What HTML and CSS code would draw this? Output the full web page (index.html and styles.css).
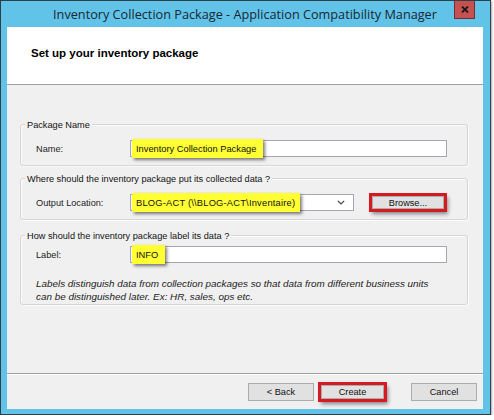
FILE: index.html
```html
<!DOCTYPE html>
<html>
<head>
<meta charset="utf-8">
<link rel="stylesheet" href="styles.css">
</head>
<body>
<div class="window">
  <div class="titlebar">
    <span class="spacer"></span>
    <span class="title">Inventory Collection Package - Application Compatibility Manager</span>
    <span class="close-wrap">
      <span class="close"><svg width="8" height="7" viewBox="0 0 8 7"><path d="M1 0.5 L7 6.5 M7 0.5 L1 6.5" stroke="#1a1a1a" stroke-width="1.8"/></svg></span>
    </span>
  </div>
  <div class="client">
    <div class="header"><h1>Set up your inventory package</h1></div>
    <div class="content">
      <section class="group g1">
        <div class="group-title">Package Name</div>
        <div class="row">
          <span class="label">Name:</span>
          <div class="field text"><span class="hl">Inventory Collection Package</span></div>
        </div>
      </section>
      <section class="group g2">
        <div class="group-title">Where should the inventory package put its collected data ?</div>
        <div class="row">
          <span class="label">Output Location:</span>
          <div class="field combo">
            <span class="hl wide">BLOG-ACT (\\BLOG-ACT\Inventaire)</span>
            <svg class="chev" width="8" height="5" viewBox="0 0 8 5"><path d="M0.8 0.8 L4 4 L7.2 0.8" fill="none" stroke="#444" stroke-width="1.2"/></svg>
          </div>
          <span class="btn browse marked">Browse...</span>
        </div>
      </section>
      <section class="group g3">
        <div class="group-title">How should the inventory package label its data ?</div>
        <div class="row">
          <span class="label">Label:</span>
          <div class="field text"><span class="hl">INFO</span></div>
        </div>
        <p class="note">Labels distinguish data from collection packages so that data from different business units<br>can be distinguished later. Ex: HR, sales, ops etc.</p>
      </section>
    </div>
    <div class="footer">
      <span class="btn back">&lt; Back</span>
      <span class="btn create marked">Create</span>
      <span class="btn cancel">Cancel</span>
    </div>
  </div>
</div>
</body>
</html>
```

FILE: styles.css
```css
* { box-sizing: border-box; }
body {
  margin: 0;
  background: #fff;
  font-family: "Liberation Sans", Arial, sans-serif;
  font-size: 9.2px;
  color: #1a1a1a;
}
.window {
  width: 491px;
  height: 415px;
  border: 1px solid #2e3f49;
  background: #62c3e9;
  padding: 0 7px 5px 6px;
  display: flex;
  flex-direction: column;
  box-shadow: 1px 1px 2px rgba(0,0,0,.35);
}
.titlebar {
  height: 26px;
  flex: none;
  display: grid;
  grid-template-columns: 1fr auto 1fr;
  align-items: start;
}
.title {
  font-family: "Open Sans", "Noto Sans", sans-serif;
  font-size: 12.7px;
  line-height: 27px;
  color: #182833;
  white-space: nowrap;
}
.close-wrap { justify-self: end; }
.close {
  display: flex;
  align-items: center;
  justify-content: center;
  width: 21px;
  height: 18px;
  margin-right: 8px;
  background: #c75050;
  border: 1px solid #6e3030;
  border-top: 0;
}
.client {
  flex: 1;
  background: #f0f0f0;
  display: flex;
  flex-direction: column;
}
.header {
  height: 58px;
  flex: none;
  background: #fff;
  border-bottom: 1px solid #a0a0a0;
  padding: 19px 0 0 24px;
}
h1 {
  margin: 0;
  font: bold 11.5px/14px "Liberation Sans", Arial, sans-serif;
  color: #000;
}
.content {
  flex: 1;
  padding: 0 15px 0 13px;
}
.group {
  border: 1px solid #d6d6d6;
  border-radius: 3px;
  box-shadow: inset 1px 1px 0 #fbfbfb, 1px 1px 0 #fbfbfb;
  padding-bottom: 8px;
}
.g1 { margin-top: 39px; }
.g2 { margin-top: 12px; }
.g3 { margin-top: 15px; padding-bottom: 1px; }
.group-title {
  margin: -6px 0 0 4px;
  padding: 0 2px;
  width: fit-content;
  background: #f0f0f0;
  line-height: 12px;
  color: #111;
}
.row {
  display: flex;
  align-items: center;
  margin-top: 9px;
  padding-left: 15px;
}
.g3 .row { margin-top: 4px; }
.label { width: 94px; color: #222; }
.field {
  height: 17px;
  border: 1px solid #a4a8ae;
  background: #fff;
  display: flex;
  align-items: center;
}
.text { width: 317px; }
.combo { width: 224px; justify-content: space-between; padding-right: 8px; }
.hl {
  height: 19px;
  margin-left: 1px;
  padding: 0 7px 0 4px;
  display: flex;
  align-items: center;
  background: #ffff33;
  color: #111;
  font-size: 9.3px;
  white-space: nowrap;
  box-shadow: 2px 2px 3px rgba(0,0,0,.5);
}
.hl.wide { letter-spacing: 0.22px; padding-right: 5px; }
.note {
  margin: 14px 0 0;
  padding-left: 15px;
  font-style: italic;
  font-size: 9.9px;
  line-height: 13px;
  color: #222;
  white-space: nowrap;
}
.btn {
  display: flex;
  align-items: center;
  justify-content: center;
  width: 66px;
  height: 18px;
  border: 1px solid #acacac;
  background: #e1e1e1;
  color: #111;
}
.marked {
  box-shadow: 0 0 0 3px #d61a22, 2px 3px 4px 2px rgba(0,0,0,.45);
}
.browse { width: 72px; height: 13px; margin-left: 18px; }
.footer {
  height: 36px;
  flex: none;
  border-top: 1px solid #a0a0a0;
  box-shadow: inset 0 1px 0 #fff;
  padding: 9px 6px 8px;
  display: flex;
  justify-content: flex-end;
  align-items: center;
}
.back { margin-right: 7px; }
.create { width: 63px; height: 14px; margin-right: 27px; }
```
